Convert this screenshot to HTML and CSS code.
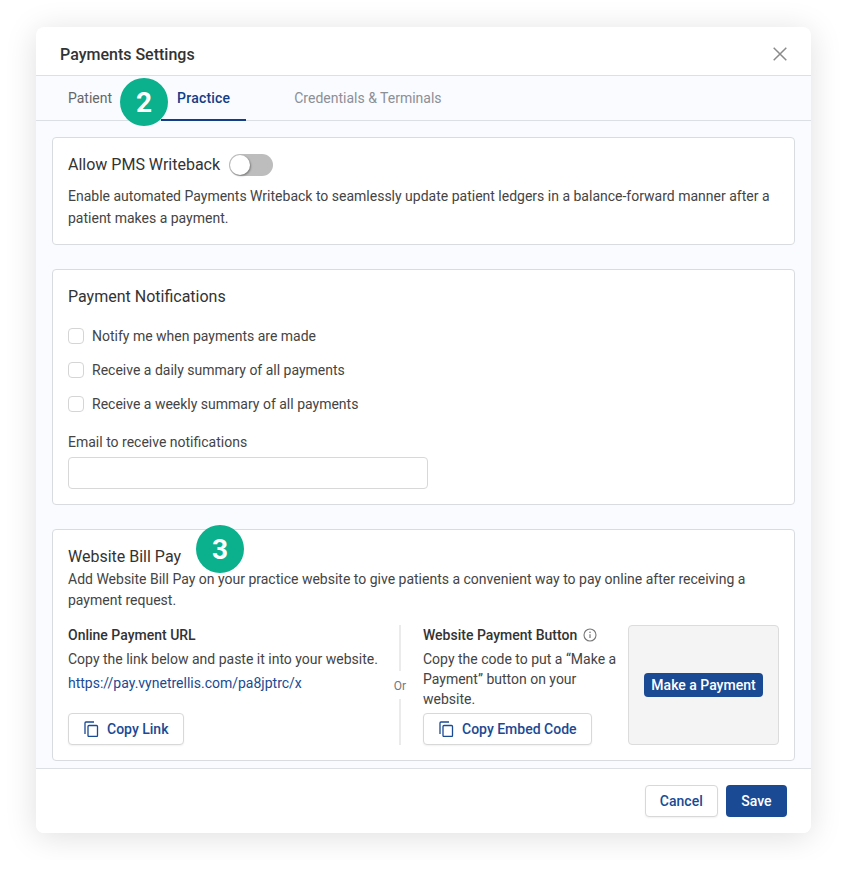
FILE: index.html
```html
<!DOCTYPE html>
<html>
<head>
    <meta charset="UTF-8">
    <title>Payments Settings</title>
    <link rel="stylesheet" href="styles.css">
</head>
<body>
    <div class="modal">
        <div class="modal-header">
            <h1 class="modal-title">Payments Settings</h1>
            <svg class="close-icon" width="14" height="14" viewBox="0 0 14 14"><path d="M.7.7l12.6 12.6M13.3.7L.7 13.3" stroke="#8a8a8a" stroke-width="1.5" fill="none"/></svg>
        </div>
        <div class="tabs">
            <span class="tab">Patient</span>
            <span class="tab tab-active">Practice</span>
            <span class="tab tab-muted">Credentials &amp; Terminals</span>
        </div>
        <span class="step-badge step-two">2</span>
        <div class="modal-body">
            <section class="card card-writeback">
                <div class="writeback-row">
                    <h2 class="card-title">Allow PMS Writeback</h2>
                    <span class="toggle"><span class="toggle-knob"></span></span>
                </div>
                <p class="card-text">Enable automated Payments Writeback to seamlessly update patient ledgers in a balance-forward manner after a patient makes a payment.</p>
            </section>
            <section class="card card-notify">
                <h2 class="card-title">Payment Notifications</h2>
                <div class="check-list">
                    <label class="check-row"><span class="check-box"></span>Notify me when payments are made</label>
                    <label class="check-row"><span class="check-box"></span>Receive a daily summary of all payments</label>
                    <label class="check-row"><span class="check-box"></span>Receive a weekly summary of all payments</label>
                </div>
                <div class="form-label">Email to receive notifications</div>
                <div class="form-input"></div>
            </section>
            <section class="card card-billpay">
                <h2 class="card-title">Website Bill Pay</h2>
                <p class="card-text billpay-text">Add Website Bill Pay on your practice website to give patients a convenient way to pay online after receiving a payment request.</p>
                <div class="billpay-grid">
                    <div class="billpay-col">
                        <h3 class="col-title">Online Payment URL</h3>
                        <p class="col-text">Copy the link below and paste it into your website.</p>
                        <a class="col-link">https://pay.vynetrellis.com/pa8jptrc/x</a>
                        <button class="btn btn-outline btn-copy">
                            <svg width="16" height="16" viewBox="0 0 16 16" fill="none" stroke="#1a4a94" stroke-width="1.3"><path d="M1 13V2c0-.6.4-1 1-1h8"/><rect x="4" y="4.5" width="9.5" height="11" rx="1"/></svg>
                            Copy Link
                        </button>
                    </div>
                    <div class="or-divider">
                        <span class="or-line"></span>
                        <span class="or-text">Or</span>
                        <span class="or-line"></span>
                    </div>
                    <div class="billpay-col">
                        <h3 class="col-title">Website Payment Button
                            <svg class="info-icon" width="14" height="14" viewBox="0 0 14 14" fill="none"><circle cx="7" cy="7" r="6" stroke="#777" stroke-width="1.1"/><path d="M7 6.2v3.9" stroke="#777" stroke-width="1.2"/><circle cx="7" cy="4.3" r=".8" fill="#777"/></svg>
                        </h3>
                        <p class="col-text">Copy the code to put a “Make a<br>Payment” button on your<br>website.</p>
                        <button class="btn btn-outline btn-copy">
                            <svg width="16" height="16" viewBox="0 0 16 16" fill="none" stroke="#1a4a94" stroke-width="1.3"><path d="M1 13V2c0-.6.4-1 1-1h8"/><rect x="4" y="4.5" width="9.5" height="11" rx="1"/></svg>
                            Copy Embed Code
                        </button>
                    </div>
                    <div class="preview-box">
                        <span class="preview-btn">Make a Payment</span>
                    </div>
                </div>
            </section>
            <span class="step-badge step-three">3</span>
        </div>
        <div class="modal-footer">
            <button class="btn btn-outline">Cancel</button>
            <button class="btn btn-primary">Save</button>
        </div>
    </div>
</body>
</html>
```

FILE: styles.css
```css
* {
    box-sizing: border-box;
}

body {
    margin: 0;
    padding: 27px 36px;
    font-family: Roboto, "Liberation Sans", sans-serif;
    background-color: #fff;
    color: #333;
}

h1, h2, h3, p {
    margin: 0;
}

.modal {
    position: relative;
    width: 775px;
    height: 806px;
    display: flex;
    flex-direction: column;
    background-color: #fff;
    border-radius: 8px;
    box-shadow: 0 4px 32px rgba(0, 0, 0, 0.13);
    overflow: hidden;
}

.modal-header {
    height: 49px;
    flex: none;
    display: flex;
    align-items: center;
    justify-content: space-between;
    padding: 7px 24px 0;
    border-bottom: 1px solid #dcdfe4;
}

.modal-title {
    font-size: 16px;
    font-weight: 500;
    color: #333;
}

.close-icon {
    margin-top: -1px;
}

.tabs {
    height: 45px;
    flex: none;
    display: flex;
    gap: 33px;
    padding-left: 16px;
    background-color: #fafbfe;
    border-bottom: 1px solid #dcdfe4;
}

.tab {
    height: 45px;
    padding: 14px 16px 0;
    font-size: 14px;
    color: #666;
}

.tab-active {
    font-weight: 500;
    letter-spacing: 0.2px;
    color: #123d87;
    border-bottom: 2px solid #123d87;
}

.tab-muted {
    margin-left: -1px;
    color: #8b8f96;
}

.step-badge {
    position: absolute;
    width: 48px;
    height: 48px;
    display: flex;
    align-items: center;
    justify-content: center;
    border-radius: 50%;
    background-color: #0bb08d;
    color: #fff;
    font-size: 28px;
    font-weight: 700;
}

.step-two {
    left: 84px;
    top: 51px;
}

.step-three {
    left: 160px;
    top: 498px;
}

.modal-body {
    flex: 1;
    padding: 16px 16px 0;
    background-color: #fafbfe;
    overflow: hidden;
}

.card {
    padding: 15px;
    background-color: #fff;
    border: 1px solid #d8dbe0;
    border-radius: 4px;
    margin-bottom: 24px;
}

.card-writeback {
    height: 108px;
}

.card-notify {
    height: 236px;
}

.card-billpay {
    height: 232px;
}

.card-title {
    font-size: 16px;
    font-weight: 400;
    line-height: 24px;
    color: #333;
}

.writeback-row {
    display: flex;
    align-items: center;
    gap: 9px;
}

.toggle {
    width: 44px;
    height: 22px;
    padding: 1px;
    border-radius: 11px;
    background-color: #bdbdbd;
}

.toggle-knob {
    display: block;
    width: 20px;
    height: 20px;
    border-radius: 50%;
    background-color: #fff;
    box-shadow: 1px 1px 2px rgba(0, 0, 0, 0.35);
}

.card-text {
    margin-top: 8px;
    font-size: 14px;
    line-height: 22px;
    color: #444;
}

.check-list {
    margin-top: 10px;
}

.check-row {
    height: 34px;
    display: flex;
    align-items: center;
    gap: 8px;
    font-size: 14px;
    color: #444;
}

.check-box {
    width: 16px;
    height: 16px;
    background-color: #fff;
    border: 1px solid #d5d5d5;
    border-radius: 4px;
}

.form-label {
    margin-top: 10px;
    font-size: 14px;
    line-height: 22px;
    color: #444;
}

.form-input {
    width: 360px;
    height: 32px;
    margin-top: 4px;
    border: 1px solid #d8d8d8;
    border-radius: 4px;
}

.billpay-text {
    margin-top: 0;
    line-height: 21px;
}

.billpay-grid {
    display: grid;
    grid-template-columns: 309px 22px 193px 151px;
    column-gap: 12px;
    height: 120px;
    margin-top: 14px;
}

.billpay-col {
    display: flex;
    flex-direction: column;
    align-items: flex-start;
}

.col-title {
    display: flex;
    align-items: center;
    gap: 6px;
    font-size: 14px;
    font-weight: 500;
    line-height: 20px;
    color: #333;
}

.col-text {
    margin-top: 4px;
    font-size: 14px;
    line-height: 20px;
    color: #444;
    white-space: nowrap;
}

.col-link {
    margin-top: 4px;
    font-size: 14px;
    line-height: 20px;
    color: #1a4a94;
}

.btn {
    height: 32px;
    padding: 0 14px;
    font-family: inherit;
    font-size: 14px;
    font-weight: 500;
    border-radius: 4px;
}

.btn-outline {
    color: #1a4a94;
    background-color: #fff;
    border: 1px solid #d8d8d8;
    box-shadow: 0 1px 2px rgba(0, 0, 0, 0.06);
}

.btn-primary {
    padding: 0 15.5px;
    color: #fff;
    background-color: #1a4a94;
    border: none;
}

.btn-copy {
    display: flex;
    align-items: center;
    gap: 7px;
    margin-top: auto;
    padding: 0 14.5px 0 15px;
}

.or-divider {
    display: flex;
    flex-direction: column;
    align-items: center;
}

.or-line {
    flex: 1;
    width: 2px;
    background-color: #ebebeb;
}

.or-text {
    padding: 8px 0 6px;
    font-size: 12px;
    line-height: 14px;
    color: #777;
}

.preview-box {
    display: flex;
    align-items: center;
    justify-content: center;
    background-color: #f4f4f4;
    border: 1px solid #dcdcdc;
    border-radius: 4px;
}

.preview-btn {
    padding: 0 7px;
    height: 24px;
    line-height: 24px;
    font-size: 14px;
    font-weight: 500;
    color: #fff;
    background-color: #1a4a94;
    border-radius: 4px;
}

.modal-footer {
    height: 65px;
    flex: none;
    display: flex;
    justify-content: flex-end;
    gap: 8px;
    padding: 16px 24px 0;
    background-color: #fff;
    border-top: 1px solid #dcdfe4;
}
```
